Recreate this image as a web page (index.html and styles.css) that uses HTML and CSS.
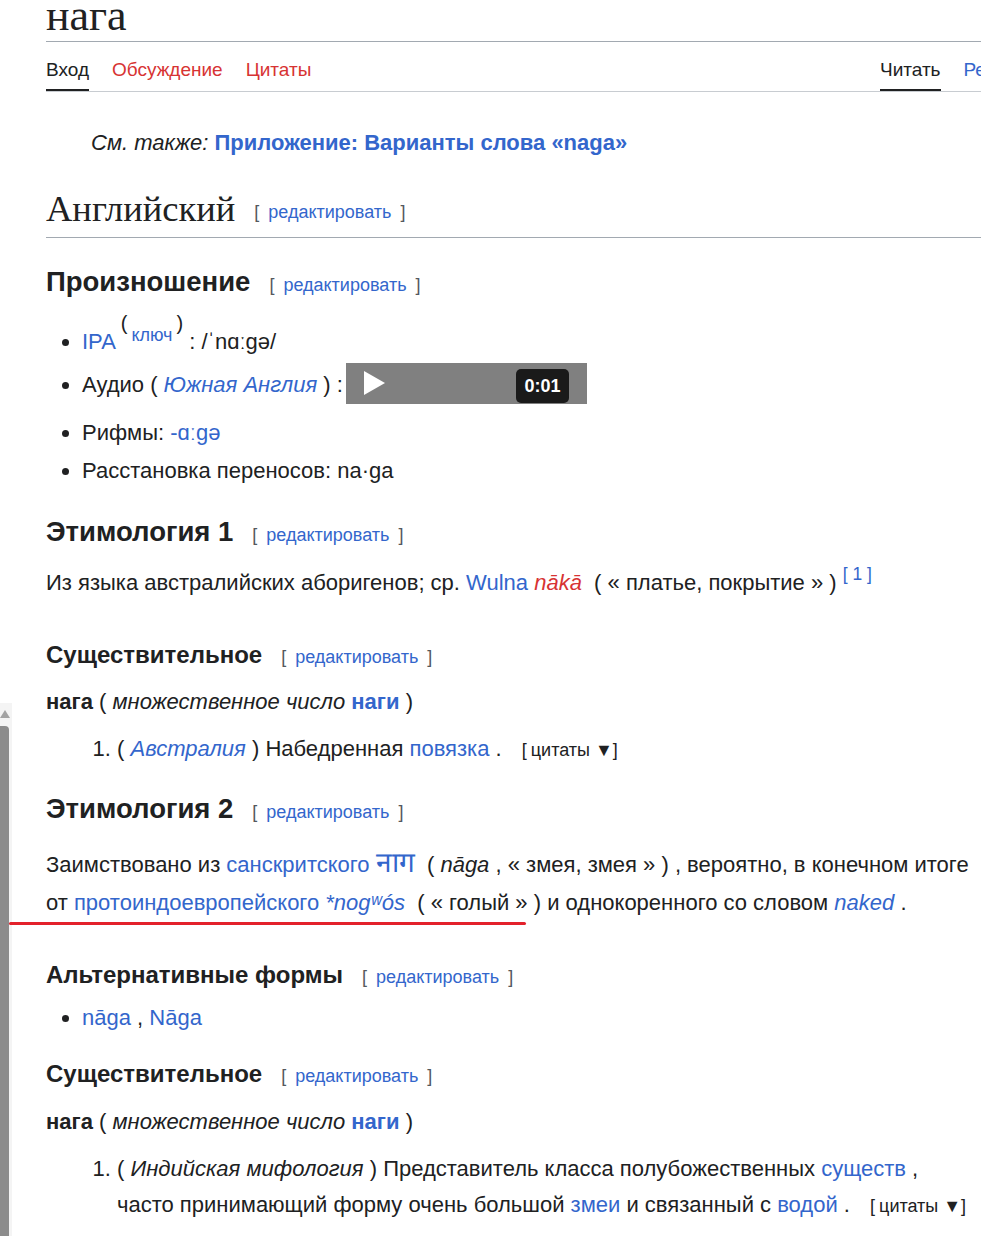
FILE: index.html
```html
<!DOCTYPE html>
<html lang="ru">
<head>
<meta charset="utf-8">
<title>нага</title>
<link rel="stylesheet" href="styles.css">
</head>
<body>
<div class="page">
  <h1 class="title">нага</h1>
  <nav class="tabs">
    <div class="tabgroup left">
      <a class="tab active">Вход</a>
      <a class="tab new">Обсуждение</a>
      <a class="tab new">Цитаты</a>
    </div>
    <div class="tabgroup">
      <a class="tab active">Читать</a>
      <a class="tab link">Редактировать</a>
      <a class="tab link">История</a>
    </div>
  </nav>

  <div class="content">
    <p class="seealso"><i>См. также:</i> <a class="link bold">Приложение: Варианты слова «naga»</a></p>

    <h2 class="lang">Английский<span class="edit"><span class="br">[</span><a class="link">редактировать</a><span class="br">]</span></span></h2>

    <h3 class="h3 pron">Произношение<span class="edit"><span class="br">[</span><a class="link">редактировать</a><span class="br">]</span></span></h3>
    <ul class="list pronlist">
      <li class="li-ipa"><a class="link">IPA</a> <span class="key"><span class="paren">(</span><a class="link">ключ</a><span class="paren">)</span></span> : /ˈnɑːɡə/</li>
      <li class="li-audio">Аудио ( <a class="link"><i>Южная Англия</i></a> ) : <span class="player"><span class="play"></span><span class="time">0:01</span></span></li>
      <li class="li-rhyme">Рифмы: <a class="link">-ɑːɡə</a></li>
      <li class="li-one">Расстановка переносов: na·ga</li>
    </ul>

    <h3 class="h3 ety1">Этимология 1<span class="edit"><span class="br">[</span><a class="link">редактировать</a><span class="br">]</span></span></h3>
    <p class="para one ety1p">Из языка австралийских аборигенов; ср. <a class="link">Wulna</a> <a class="new"><i>nākā</i></a> &nbsp;( « платье, покрытие » ) <sup class="ref"><a class="link">[ 1 ]</a></sup></p>

    <h4 class="h4 noun1">Существительное<span class="edit"><span class="br">[</span><a class="link">редактировать</a><span class="br">]</span></span></h4>
    <p class="para one head1"><b>нага</b> ( <i>множественное число</i> <a class="link bold">наги</a> )</p>
    <ol class="defs defs1">
      <li class="li-one">( <a class="link"><i>Австралия</i></a> ) Набедренная <a class="link">повязка</a> . <span class="cites"><span>[</span>цитаты ▼<span>]</span></span></li>
    </ol>

    <h3 class="h3 ety2">Этимология 2<span class="edit"><span class="br">[</span><a class="link">редактировать</a><span class="br">]</span></span></h3>
    <p class="para two ety2p">Заимствовано из <a class="link">санскритского</a> <a class="link deva">नाग</a> &nbsp;( <i>nāga</i> , « змея, змея » ) , вероятно, в конечном итоге от <a class="link">протоиндоевропейского</a> <a class="link"><i>*nogʷós</i></a> &nbsp;( « голый » ) и однокоренного со словом <a class="link"><i>naked</i></a> .</p>

    <h4 class="h4 alt">Альтернативные формы<span class="edit"><span class="br">[</span><a class="link">редактировать</a><span class="br">]</span></span></h4>
    <ul class="list altlist">
      <li class="li-one"><a class="link">nāga</a> , <a class="link">Nāga</a></li>
    </ul>

    <h4 class="h4 noun2">Существительное<span class="edit"><span class="br">[</span><a class="link">редактировать</a><span class="br">]</span></span></h4>
    <p class="para one head2"><b>нага</b> ( <i>множественное число</i> <a class="link bold">наги</a> )</p>
    <ol class="defs defs2">
      <li class="li-two">( <i>Индийская мифология</i> ) Представитель класса полубожественных <a class="link">существ</a> , часто принимающий форму очень большой <a class="link">змеи</a> и связанный с <a class="link">водой</a> . <span class="cites"><span>[</span>цитаты ▼<span>]</span></span></li>
    </ol>
  </div>
</div>

<div class="scrollbar"><span class="arrow"></span><span class="thumb"></span></div>
<div class="redline"></div>
</body>
</html>
```

FILE: styles.css
```css
html, body {
  margin: 0;
  padding: 0;
  background: #ffffff;
}
body {
  font-family: "Liberation Sans", Arial, sans-serif;
  color: #202122;
  font-size: 22px;
  overflow: hidden;
  height: 1236px;
}
a { text-decoration: none; }
.link { color: #3366cc; }
.new { color: #d73333; }
.bold { font-weight: bold; }

.page {
  padding-left: 46px;
}

.title {
  font-family: "Liberation Serif", "Times New Roman", serif;
  font-weight: normal;
  font-size: 44px;
  line-height: 44px;
  margin: -6px 0 0;
  padding-bottom: 3px;
  border-bottom: 1px solid #a2a9b1;
  color: #202122;
}

.tabs {
  display: flex;
  height: 49px;
  border-bottom: 1px solid #c8ccd1;
  font-size: 19px;
  white-space: nowrap;
}
.tabgroup {
  display: flex;
  gap: 23px;
  flex-shrink: 0;
}
.tabgroup.left {
  width: 834px;
}
.tab {
  display: block;
  padding-top: 17px;
  line-height: 22px;
  height: 49px;
  box-sizing: border-box;
  color: #202122;
}
.tab.new { color: #d73333; }
.tab.link { color: #3366cc; }
.tab.active {
  box-shadow: inset 0 -2px 0 #202122;
}

.content p, .content h2, .content h3, .content h4, .content ul, .content ol {
  margin: 0;
}

.seealso {
  margin-top: 36px !important;
  padding-left: 45px;
  line-height: 30px;
  height: 30px;
}

.edit {
  font-family: "Liberation Sans", Arial, sans-serif;
  font-weight: normal;
  font-size: 18px;
  margin-left: 19px;
  white-space: nowrap;
}
.edit .br {
  color: #54595d;
}
.edit a {
  margin: 0 9px;
}

.lang {
  font-family: "Liberation Serif", "Times New Roman", serif;
  font-weight: normal;
  font-size: 36.5px;
  line-height: 40px;
  height: 40px;
  margin-top: 31px !important;
  padding-bottom: 8px;
  border-bottom: 1px solid #a2a9b1;
}
.lang .edit { vertical-align: 3px; }

.h3 {
  font-size: 27.5px;
  font-weight: bold;
  line-height: 34px;
  height: 34px;
}
.h4 {
  font-size: 24px;
  font-weight: bold;
  line-height: 32px;
  height: 32px;
}

.pron { margin-top: 27px !important; }

.list {
  padding-left: 36px;
}
.list li {
  line-height: 38px;
}
.li-one, .li-ipa { height: 38px; }
.pronlist { margin-top: 24px !important; }

.key {
  font-size: 18px;
  line-height: 0;
  vertical-align: 8px;
}
.key .paren {
  font-size: 20px;
  vertical-align: 11px;
}
.key a { margin: 0 4px; }

.li-audio {
  line-height: 44px !important;
  height: 44px;
  margin-top: 2px;
}
.player {
  display: inline-block;
  vertical-align: -12px;
  position: relative;
  width: 241px;
  height: 41px;
  background: #808080;
  margin-left: -3px;
  line-height: 0;
}
.play {
  position: absolute;
  left: 18px;
  top: 8px;
  width: 0;
  height: 0;
  border-top: 12px solid transparent;
  border-bottom: 12px solid transparent;
  border-left: 21px solid #ffffff;
}
.time {
  position: absolute;
  left: 170px;
  top: 6px;
  width: 53px;
  height: 34px;
  border-radius: 5px;
  background: #1a1a1a;
  color: #ffffff;
  font-weight: bold;
  font-size: 18px;
  line-height: 34px;
  text-align: center;
}
.li-rhyme { margin-top: 7px; height: 38px; }

.ety1 { margin-top: 25px !important; }
.para { line-height: 38px; padding-right: 10px; }
.para.one { height: 38px; }
.para.two { height: 76px; }
.ety1p { margin-top: 15px !important; }
.ref {
  font-size: 17.5px;
  line-height: 0;
  vertical-align: 10px;
}

.noun1 { margin-top: 37px !important; }
.head1 { margin-top: 12px !important; }

.defs {
  padding-left: 71px;
  padding-right: 10px;
}
.defs li { line-height: 38px; }
.defs1 { margin-top: 9px !important; }
.cites {
  font-size: 18px;
  margin-left: 14px;
  color: #202122;
  white-space: nowrap;
}
.cites span:first-child { margin-right: 4px; }

.ety2 { margin-top: 24px !important; }
.ety2p { margin-top: 20px !important; }
.deva { font-size: 28px; line-height: 0; }

.alt { margin-top: 37px !important; }
.altlist { margin-top: 8px !important; }
.noun2 { margin-top: 21px !important; }
.head2 { margin-top: 13px !important; }
.defs2 { margin-top: 10px !important; }
.defs2 li { line-height: 36px; }
.li-two { height: 72px; }

.scrollbar {
  position: absolute;
  left: 0;
  top: 703px;
  width: 12px;
  height: 533px;
  background: #f4f4f4;
}
.scrollbar .arrow {
  position: absolute;
  left: 0;
  top: 7px;
  width: 0;
  height: 0;
  border-left: 5px solid transparent;
  border-right: 5px solid transparent;
  border-bottom: 8px solid #a3a3a3;
}
.scrollbar .thumb {
  position: absolute;
  left: 0;
  top: 23px;
  width: 9px;
  height: 520px;
  background: #8c8c8c;
  border-radius: 0 4px 0 0;
}

.redline {
  position: absolute;
  left: 9px;
  top: 922px;
  width: 517px;
  height: 3px;
  background: #e3212b;
  border-radius: 2px;
}
```
